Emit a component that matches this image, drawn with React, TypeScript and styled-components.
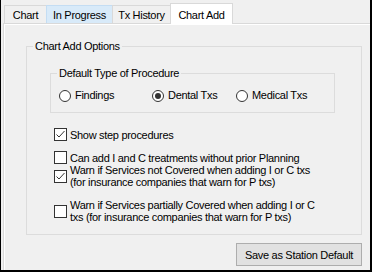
import styled, { createGlobalStyle } from 'styled-components';

const GlobalStyle = createGlobalStyle`
  html, body {
    margin: 0;
    padding: 0;
    background: #f0f0f0;
  }
  body {
    font-family: "Liberation Sans", Arial, sans-serif;
    font-size: 11px;
    letter-spacing: -0.3px;
    color: #000;
  }
`;

const tabs = [
  { label: 'Chart', width: 43 },
  { label: 'In Progress', width: 67, hover: true },
  { label: 'Tx History', width: 59 },
  { label: 'Chart Add', width: 63, active: true },
];

const CheckMark = () => (
  <svg width="11" height="11" viewBox="0 0 11 11">
    <polyline points="1.5,5.5 4,8 9.5,2" fill="none" stroke="#333" strokeWidth="1" />
  </svg>
);

const Check = ({ checked }: { checked?: boolean }) => <CheckBox>{checked && <CheckMark />}</CheckBox>;

const App = () => {
  return (
    <>
      <GlobalStyle />
      <Frame>
        <TabStrip>
          {tabs.map((t) => (
            <Tab key={t.label} $w={t.width} $active={t.active} $hover={t.hover}>
              {t.label}
            </Tab>
          ))}
        </TabStrip>
        <Page>
          <Group $h={196}>
            <Legend>Chart Add Options</Legend>
            <GroupBody>
              <InnerGroup $h={47}>
                <Legend>Default Type of Procedure</Legend>
                <RadioRow>
                  <Radio>
                    <RadioDot />
                    Findings
                  </Radio>
                  <Radio>
                    <RadioDot $on />
                    Dental Txs
                  </Radio>
                  <Radio>
                    <RadioDot />
                    Medical Txs
                  </Radio>
                </RadioRow>
              </InnerGroup>
              <CheckList>
                <CheckRow $top={15}>
                  <Check checked />
                  <CheckText>Show step procedures</CheckText>
                </CheckRow>
                <CheckRow $top={10}>
                  <Check />
                  <CheckText>Can add I and C treatments without prior Planning</CheckText>
                </CheckRow>
                <CheckRow $top={0}>
                  <Check checked />
                  <CheckText>
                    Warn if Services not Covered when adding I or C txs
                    <br />
                    (for insurance companies that warn for P txs)
                  </CheckText>
                </CheckRow>
                <CheckRow $top={11}>
                  <Check />
                  <CheckText>
                    Warn if Services partially Covered when adding I or C
                    <br />
                    txs (for insurance companies that warn for P txs)
                  </CheckText>
                </CheckRow>
              </CheckList>
            </GroupBody>
          </Group>
          <Footer>
            <Button>Save as Station Default</Button>
          </Footer>
        </Page>
      </Frame>
    </>
  );
};

export default App;

const Frame = styled.div`
  width: 372px;
  height: 272px;
  box-sizing: border-box;
  border-left: 1px solid #000;
  border-right: 2px solid #000;
  border-bottom: 2px solid #000;
  background: #f0f0f0;
  display: flex;
  flex-direction: column;
`;

const TabStrip = styled.div`
  height: 23px;
  display: flex;
  align-items: flex-end;
  padding-left: 3px;
`;

const Tab = styled.div<{ $w: number; $active?: boolean; $hover?: boolean }>`
  width: ${(p) => p.$w}px;
  height: ${(p) => (p.$active ? 21 : 18)}px;
  margin-left: -1px;
  margin-bottom: ${(p) => (p.$active ? -1 : 0)}px;
  box-sizing: border-box;
  border: 1px solid ${(p) => (p.$hover ? '#c4ddf3' : '#d9d9d9')};
  border-bottom: none;
  background: ${(p) => (p.$active ? '#fff' : p.$hover ? '#d8eaf9' : '#f0f0f0')};
  display: flex;
  align-items: center;
  justify-content: center;
  padding-top: 1px;
  z-index: ${(p) => (p.$active ? 1 : 0)};
  position: relative;
  white-space: nowrap;

  &:first-child {
    margin-left: 0;
  }
`;

const Page = styled.div`
  flex: 1;
  margin-left: 2px;
  border-top: 1px solid #d9d9d9;
  border-left: 1px solid #d9d9d9;
  box-shadow: inset 1px 1px 0 #fff;
  padding: 15px 8px 0 22px;
  display: flex;
  flex-direction: column;
`;

const Group = styled.fieldset<{ $h: number }>`
  margin: 0;
  padding: 0;
  min-width: 0;
  height: ${(p) => p.$h}px;
  box-sizing: border-box;
  border: 1px solid #dcdcdc;
`;

const InnerGroup = styled(Group)`
  margin-top: 13px;
  width: 285px;
`;

const Legend = styled.legend`
  margin-left: 6px;
  padding: 0 2px;
  line-height: 14px;
`;

const GroupBody = styled.div`
  padding-left: 23px;
`;

const RadioRow = styled.div`
  margin-top: 9px;
  padding-left: 8px;
  display: grid;
  grid-template-columns: 93px 84px auto;
  line-height: 13px;
`;

const Radio = styled.label`
  display: flex;
  align-items: center;
  gap: 4px;
`;

const RadioDot = styled.span<{ $on?: boolean }>`
  width: 12px;
  height: 12px;
  box-sizing: border-box;
  border: 1px solid #333;
  border-radius: 50%;
  background: #fff;
  display: flex;
  align-items: center;
  justify-content: center;

  &::after {
    content: '';
    width: 6px;
    height: 6px;
    border-radius: 50%;
    background: ${(p) => (p.$on ? '#333' : 'transparent')};
  }
`;

const CheckList = styled.div`
  padding-left: 4px;
  display: flex;
  flex-direction: column;
`;

const CheckRow = styled.label<{ $top: number }>`
  margin-top: ${(p) => p.$top}px;
  display: flex;
  align-items: center;
  gap: 3px;
`;

const CheckBox = styled.span`
  width: 13px;
  height: 13px;
  flex: none;
  box-sizing: border-box;
  border: 1px solid #333;
  background: #fff;
  display: flex;
  align-items: center;
  justify-content: center;
`;

const CheckText = styled.span`
  line-height: 12px;
  white-space: nowrap;
`;

const Footer = styled.div`
  margin-top: 8px;
  display: flex;
  justify-content: flex-end;
`;

const Button = styled.button`
  width: 126px;
  height: 23px;
  padding: 0;
  border: 1px solid #adadad;
  background: #e1e1e1;
  font-family: inherit;
  font-size: 11px;
  letter-spacing: -0.3px;
  color: #000;
`;
